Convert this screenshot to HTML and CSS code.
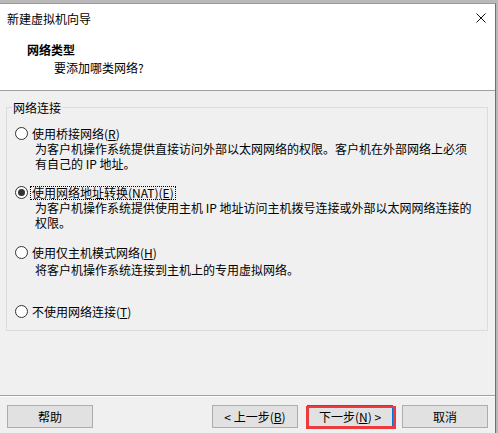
FILE: index.html
```html
<!DOCTYPE html>
<html lang="zh-CN">
<head>
<meta charset="utf-8">
<title>新建虚拟机向导</title>
<link rel="stylesheet" href="styles.css">
</head>
<body>
<div class="window">
  <div class="header">
    <div class="titlebar">
      <span class="title">新建虚拟机向导</span>
      <svg class="close" width="10" height="10" viewBox="0 0 10 10"><path d="M0.5 0.5L9.5 9.5M9.5 0.5L0.5 9.5" stroke="#111" stroke-width="1" fill="none"/></svg>
    </div>
    <div class="heading">网络类型</div>
    <div class="subheading">要添加哪类网络?</div>
  </div>
  <div class="main">
    <fieldset class="group">
      <legend>网络连接</legend>
      <div class="option opt1">
        <div class="opt-label"><span class="radio"></span><span class="text">使用桥接网络(<u>R</u>)</span></div>
        <div class="desc">为客户机操作系统提供直接访问外部以太网网络的权限。客户机在外部网络上必须<br>有自己的 IP 地址。</div>
      </div>
      <div class="option opt2">
        <div class="opt-label"><span class="radio checked"></span><span class="text focus">使用网络地址转换(NAT)(<u>E</u>)</span></div>
        <div class="desc">为客户机操作系统提供使用主机 IP 地址访问主机拨号连接或外部以太网网络连接的<br>权限。</div>
      </div>
      <div class="option opt3">
        <div class="opt-label"><span class="radio"></span><span class="text">使用仅主机模式网络(<u>H</u>)</span></div>
        <div class="desc desc3">将客户机操作系统连接到主机上的专用虚拟网络。</div>
      </div>
      <div class="option opt4">
        <div class="opt-label"><span class="radio"></span><span class="text">不使用网络连接(<u>T</u>)</span></div>
      </div>
    </fieldset>
  </div>
  <div class="footer">
    <button class="btn">帮助</button>
    <div class="btn-group">
      <button class="btn">&lt; 上一步(<u>B</u>)</button>
      <button class="btn default">下一步(<u>N</u>) &gt;<span class="highlight"></span></button>
      <button class="btn">取消</button>
    </div>
  </div>
</div>
</body>
</html>
```
FILE: styles.css
```css
* { box-sizing: border-box; }
html, body { margin: 0; padding: 0; }
body {
  width: 498px;
  height: 433px;
  overflow: hidden;
  background: #b9b9b9;
  font-family: "Noto Sans CJK SC", "Microsoft YaHei", sans-serif;
  font-size: 12px;
  color: #000;
}
.window {
  width: 496px;
  height: 430px;
  margin-top: 3px;
  border-top: 1px solid #9b9b9b;
  border-right: 1px solid #707070;
  background: #f0f0f0;
}
.header {
  height: 87px;
  background: #fff;
  border-bottom: 1px solid #a0a0a0;
}
.titlebar {
  display: flex;
  justify-content: space-between;
  align-items: flex-start;
  padding: 7px 9px 0 7px;
  line-height: 15px;
}
.close { margin-top: 2px; display: block; }
.heading {
  margin-top: 16px;
  padding-left: 27px;
  font-weight: bold;
  line-height: 15px;
}
.subheading {
  margin-top: 3px;
  padding-left: 54px;
  line-height: 15px;
}
.main {
  height: 304px;
  padding-top: 9px;
}
.group {
  margin: 0 0 0 6px;
  width: 482px;
  min-width: 0;
  border: 1px solid #dcdcdc;
  padding: 11px 0 11px 5px;
}
.group legend {
  padding: 0 1px;
  line-height: 15px;
  font-size: 12px;
}
.opt-label {
  display: flex;
  align-items: center;
  height: 15px;
  line-height: 15px;
  white-space: nowrap;
}
.radio {
  width: 13px;
  height: 13px;
  margin-left: 3px;
  border: 1px solid #333;
  border-radius: 50%;
  background: #fff;
  display: flex;
  align-items: center;
  justify-content: center;
  flex: none;
}
.radio.checked::after {
  content: "";
  width: 7px;
  height: 7px;
  border-radius: 50%;
  background: #333;
}
.text {
  display: inline-block;
  margin-left: 2px;
  padding: 0 1px;
  border: 1px dotted transparent;
  line-height: 12px;
}
.text.focus { border-color: #000; }
.desc {
  padding-left: 23px;
  line-height: 15px;
  white-space: nowrap;
}
.opt2 { margin-top: 14px; }
.opt3 { margin-top: 15px; }
.desc3 { margin-top: 2px; }
.opt4 { margin-top: 27px; }
.footer {
  height: 38px;
  border-top: 1px solid #a0a0a0;
  box-shadow: inset 0 1px 0 #fff;
  padding: 9px 7px 0 7px;
  display: flex;
  justify-content: space-between;
  align-items: flex-start;
}
.btn-group {
  display: flex;
  gap: 9px;
}
.btn {
  position: relative;
  width: 86px;
  height: 23px;
  margin: 0;
  padding: 0;
  background: #e1e1e1;
  border: 1px solid #adadad;
  font-family: inherit;
  font-size: 12px;
  line-height: 21px;
  color: #000;
  text-align: center;
}
.btn.default { border-color: #0078d7; }
.highlight {
  position: absolute;
  left: -2px;
  top: 0;
  width: 90px;
  height: 23px;
  border: 3px solid #ec3b3e;
  border-top-width: 2px;
  pointer-events: none;
}
u { text-decoration-thickness: 1px; text-underline-offset: 1px; }
```
